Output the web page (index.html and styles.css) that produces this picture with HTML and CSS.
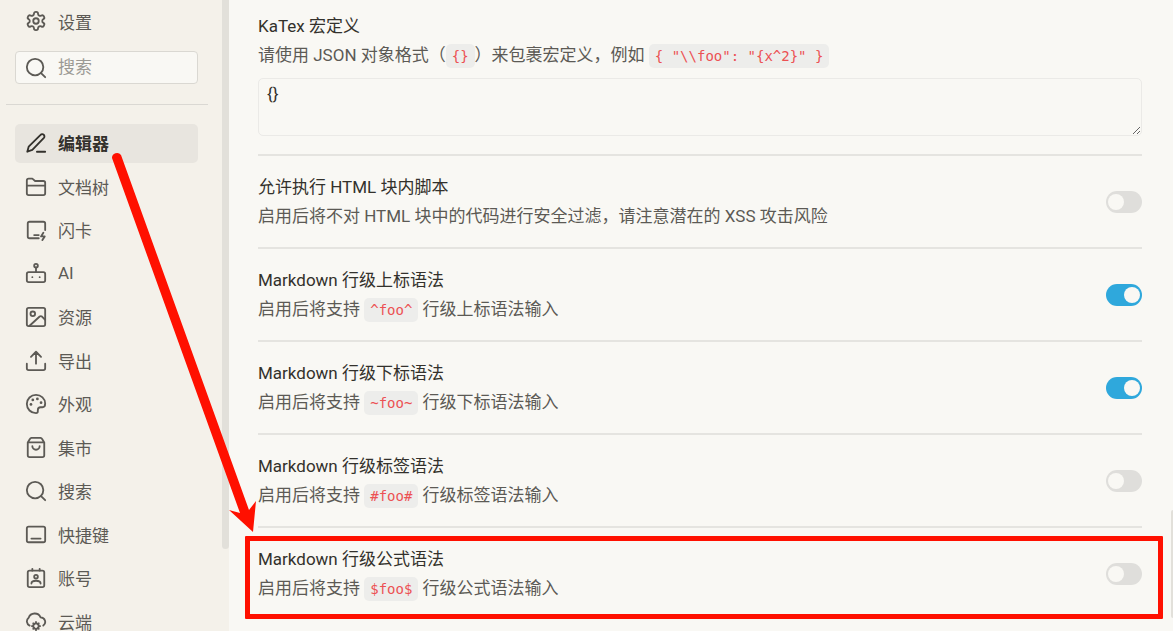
FILE: index.html
```html
<!DOCTYPE html>
<html lang="zh-CN">
<head>
  <meta charset="UTF-8">
  <meta name="viewport" content="width=device-width, initial-scale=1.0">
  <title>设置</title>
  <link rel="stylesheet" href="styles.css">
</head>
<body>
  <aside class="sidebar">
    <div class="sidebar-content">
      <div class="sidebar-title">
        <svg class="icon" viewBox="0 0 24 24"><path d="M12.22 2h-.44a2 2 0 0 0-2 2v.18a2 2 0 0 1-1 1.73l-.43.25a2 2 0 0 1-2 0l-.15-.08a2 2 0 0 0-2.73.73l-.22.38a2 2 0 0 0 .73 2.73l.15.1a2 2 0 0 1 1 1.72v.51a2 2 0 0 1-1 1.74l-.15.09a2 2 0 0 0-.73 2.73l.22.38a2 2 0 0 0 2.73.73l.15-.08a2 2 0 0 1 2 0l.43.25a2 2 0 0 1 1 1.73V20a2 2 0 0 0 2 2h.44a2 2 0 0 0 2-2v-.18a2 2 0 0 1 1-1.73l.43-.25a2 2 0 0 1 2 0l.15.08a2 2 0 0 0 2.73-.73l.22-.39a2 2 0 0 0-.73-2.73l-.15-.08a2 2 0 0 1-1-1.74v-.5a2 2 0 0 1 1-1.74l.15-.09a2 2 0 0 0 .73-2.73l-.22-.38a2 2 0 0 0-2.73-.73l-.15.08a2 2 0 0 1-2 0l-.43-.25a2 2 0 0 1-1-1.73V4a2 2 0 0 0-2-2z"/><circle cx="12" cy="12" r="3"/></svg>
        <span>设置</span>
      </div>
      <label class="search">
        <svg class="icon" viewBox="0 0 24 24"><circle cx="11" cy="11" r="9"/><path d="M17.5 17.5 22 22"/></svg>
        <input type="text" class="search-input" placeholder="搜索" aria-label="搜索">
      </label>
      <hr class="sidebar-line">
      <nav class="menu">
        <a href="#" class="menu-item active">
          <svg class="icon" viewBox="0 0 24 24"><path d="M13 21.5h9"/><path d="M17 3.2a2.4 2.4 0 0 1 3.6 3.2L8 19.5l-5.500 2 1.500-5.500z"/></svg>
          <span>编辑器</span>
        </a>
        <a href="#" class="menu-item">
          <svg class="icon" viewBox="0 0 24 24"><path d="M2 20V6a2 2 0 0 1 2-2h4l3 2.500h9a2 2 0 0 1 2 2V20a2 2 0 0 1-2 2H4a2 2 0 0 1-2-2zM2 11.500h20"/></svg>
          <span>文档树</span>
        </a>
        <a href="#" class="menu-item">
          <svg class="icon" viewBox="0 0 24 24"><path d="M22 12V5a2 2 0 0 0-2-2H5a2 2 0 0 0-2 2v14a2 2 0 0 0 2 2h10M10 17.500h5"/><path d="M20 15l-2.500 4h4L19 23"/></svg>
          <span>闪卡</span>
        </a>
        <a href="#" class="menu-item">
          <svg class="icon" viewBox="0 0 24 24"><rect x="2" y="11" width="20" height="11" rx="2"/><circle cx="12" cy="4" r="2"/><path d="M12 6v5M8 16.500h.01M16 16.500h.01"/></svg>
          <span>AI</span>
        </a>
        <a href="#" class="menu-item">
          <svg class="icon" viewBox="0 0 24 24"><rect x="2" y="2" width="20" height="20" rx="2"/><circle cx="8.500" cy="8.500" r="2.500"/><path d="M5 21.500 16 11.500a2 2 0 0 1 2.500 0L22 15"/></svg>
          <span>资源</span>
        </a>
        <a href="#" class="menu-item">
          <svg class="icon" viewBox="0 0 24 24"><path d="M12 16V3M6.500 8.500 12 3l5.500 5.500M2 16v5a2 2 0 0 0 2 2h16a2 2 0 0 0 2-2v-5"/></svg>
          <span>导出</span>
        </a>
        <a href="#" class="menu-item">
          <svg class="icon" viewBox="0 0 24 24"><path d="M12 2a10 10 0 0 0 0 20c1.500 0 2-1 2-2v-1.500c0-2 1-3 3-3h2c2 0 3-1.500 3-4C22 6 17.500 2 12 2z"/><circle class="dot" cx="13.500" cy="6.500" r="1.500"/><circle class="dot" cx="8.500" cy="7.500" r="1.500"/><circle class="dot" cx="17.500" cy="10.500" r="1.500"/><circle class="dot" cx="6.500" cy="12.500" r="1.500"/></svg>
          <span>外观</span>
        </a>
        <a href="#" class="menu-item">
          <svg class="icon" viewBox="0 0 24 24"><path d="M3 7v14a2 2 0 0 0 2 2h14a2 2 0 0 0 2-2V7l-2.500-4a2 2 0 0 0-1.500-1H7a2 2 0 0 0-1.500 1zM3 7h18M8 11a4 4 0 0 0 8 0"/></svg>
          <span>集市</span>
        </a>
        <a href="#" class="menu-item">
          <svg class="icon" viewBox="0 0 24 24"><circle cx="11" cy="11" r="9"/><path d="M17.500 17.500 22 22"/></svg>
          <span>搜索</span>
        </a>
        <a href="#" class="menu-item">
          <svg class="icon" viewBox="0 0 24 24"><rect x="2" y="4" width="20" height="17" rx="2"/><path d="M7 17h10"/></svg>
          <span>快捷键</span>
        </a>
        <a href="#" class="menu-item">
          <svg class="icon" viewBox="0 0 24 24"><rect x="3" y="4" width="18" height="18" rx="2"/><circle cx="12" cy="10.500" r="2"/><path d="M8 2v2M16 2v2M7 18c0-2 2-3 5-3s5 1 5 3"/></svg>
          <span>账号</span>
        </a>
        <a href="#" class="menu-item">
          <svg class="icon" viewBox="0 0 24 24"><path d="M5 17a5 5 0 0 1-1-8.500A7 7 0 0 1 17 8a5 5 0 0 1 3 9"/><circle cx="12" cy="17.500" r="3"/><path d="M12 13v1.500M12 20.500V22M7.500 17.500H9M15 17.500h1.500M9 14.500l1 1M15 14.500l-1 1M9 20.500l1-1M15 20.500l-1-1"/></svg>
          <span>云端</span>
        </a>
      </nav>
    </div>
    <div class="sidebar-scrollbar"></div>
  </aside>

  <main class="content">
    <section class="row row-block">
      <label class="title" for="katexMacros">KaTex 宏定义</label>
      <div class="desc">请使用 JSON 对象格式（<code>{}</code>）来包裹宏定义，例如 <code>{ "\\foo": "{x^2}" }</code></div>
      <textarea id="katexMacros" class="macros" spellcheck="false">{}</textarea>
    </section>
    <label class="row">
      <span class="text">
        <span class="title">允许执行 HTML 块内脚本</span>
        <span class="desc">启用后将不对 HTML 块中的代码进行安全过滤，请注意潜在的 XSS 攻击风险</span>
      </span>
      <input type="checkbox" class="switch">
    </label>
    <label class="row">
      <span class="text">
        <span class="title">Markdown 行级上标语法</span>
        <span class="desc">启用后将支持 <code>^foo^</code> 行级上标语法输入</span>
      </span>
      <input type="checkbox" class="switch" checked>
    </label>
    <label class="row">
      <span class="text">
        <span class="title">Markdown 行级下标语法</span>
        <span class="desc">启用后将支持 <code>~foo~</code> 行级下标语法输入</span>
      </span>
      <input type="checkbox" class="switch" checked>
    </label>
    <label class="row">
      <span class="text">
        <span class="title">Markdown 行级标签语法</span>
        <span class="desc">启用后将支持 <code>#foo#</code> 行级标签语法输入</span>
      </span>
      <input type="checkbox" class="switch">
    </label>
    <label class="row marked">
      <span class="text">
        <span class="title">Markdown 行级公式语法</span>
        <span class="desc">启用后将支持 <code>$foo$</code> 行级公式语法输入</span>
      </span>
      <input type="checkbox" class="switch">
    </label>
  </main>
  <div class="page-scrollbar"></div>

  <svg class="arrow" viewBox="0 0 160 400" width="160" height="400">
    <path d="M13 8a5 5 0 0 1 9-3L150 360l7-9-3 31-24-22 11 3z"/>
  </svg>
</body>
</html>
```
FILE: styles.css
```css
* {
  box-sizing: border-box;
}
body {
  margin: 0;
  display: flex;
  height: 100vh;
  overflow: hidden;
  position: relative;
  font-family: Roboto, "Noto Sans CJK SC", sans-serif;
  font-size: 17px;
  color: #5c5a55;
  background-color: #f9f8f4;
}

/* sidebar */
.sidebar {
  flex: 0 0 229px;
  min-width: 0;
  display: flex;
  background-color: #f4f1ea;
}
.sidebar-content {
  flex: 1;
  min-width: 0;
  display: flex;
  flex-direction: column;
}
.sidebar-title {
  display: flex;
  align-items: center;
  gap: 11px;
  height: 42px;
  padding-left: 25px;
}
.icon {
  width: 22px;
  height: 22px;
  flex: none;
  fill: none;
  stroke: currentColor;
  stroke-width: 2;
  stroke-linecap: round;
  stroke-linejoin: round;
}
.icon .dot {
  fill: currentColor;
  stroke: none;
}
.search {
  display: flex;
  align-items: center;
  gap: 11px;
  height: 33px;
  margin: 9px 24px 0 15px;
  padding-left: 9px;
  border: 1px solid #dad8d2;
  border-radius: 4px;
  background-color: #f9f8f4;
}
.search-input {
  flex: 1;
  min-width: 0;
  padding: 0 0 2px;
  border: none;
  outline: none;
  background: none;
  font: inherit;
  color: inherit;
}
.search-input::placeholder {
  color: #9c9a94;
}
.sidebar-line {
  align-self: stretch;
  margin: 20px 14px 19px 6px;
  border: none;
  border-top: 1px solid #dad8d3;
}
/* the last item runs past the bottom edge */
.menu {
  flex: 1;
  display: flex;
  flex-direction: column;
  justify-content: space-between;
  margin: 0 24px -11px 15px;
}
.menu-item {
  display: flex;
  align-items: center;
  gap: 11px;
  height: 39px;
  padding: 0 0 2px 10px;
  border-radius: 5px;
  color: inherit;
  text-decoration: none;
}
.menu-item.active {
  background-color: #e8e5df;
  color: #33312c;
  font-weight: bold;
}
.sidebar-scrollbar {
  width: 7px;
  height: 87%;
  border-radius: 0 0 4px 4px;
  background-color: #e2e0da;
}

/* settings */
.content {
  flex: 1;
  min-width: 0;
  padding: 0 29px;
}
.row {
  display: flex;
  align-items: center;
  justify-content: space-between;
  padding: 17px 0 16px;
  border-bottom: 2px solid #e5e4e0;
  line-height: 29px;
}
.row-block {
  display: block;
  padding: 12px 0 18px;
}
.row:last-child {
  border-bottom: none;
}
.title,
.desc {
  display: block;
}
.title {
  color: #33312c;
}
code {
  padding: 4px 6px;
  border-radius: 5px;
  background-color: #ededeb;
  color: #ec5153;
  font-family: "DejaVu Sans Mono", monospace;
  font-size: 14px;
  line-height: 1;
}
.macros {
  display: block;
  width: 100%;
  height: 58px;
  margin-top: 8px;
  padding: 3px 8px;
  border: 1px solid #ebeae7;
  border-radius: 5px;
  outline: none;
  background-color: #f9f8f4;
  color: #33312c;
  font: inherit;
  line-height: 24px;
  resize: vertical;
}
.switch {
  appearance: none;
  flex: none;
  display: flex;
  width: 36px;
  height: 22px;
  margin: 0;
  padding: 3px 2px;
  border-radius: 11px;
  background-color: #dfdedb;
}
.switch::before {
  content: "";
  width: 16px;
  height: 16px;
  border-radius: 50%;
  background-color: #f9f8f4;
}
.switch:checked {
  justify-content: flex-end;
  background-color: #2fa8dc;
}
.page-scrollbar {
  align-self: flex-end;
  width: 2px;
  height: 108px;
  margin-bottom: 13px;
  border-radius: 2px 0 0 2px;
  background-color: #e2e0da;
}

/* red annotation */
.marked {
  position: relative;
}
.marked::after {
  content: "";
  position: absolute;
  inset: 8px -21px 0 -13px;
  border: 5px solid #ff1000;
  border-radius: 1px;
  pointer-events: none;
}
.arrow {
  position: absolute;
  left: 99px;
  top: 150px;
  fill: #ff1000;
  pointer-events: none;
}
```
